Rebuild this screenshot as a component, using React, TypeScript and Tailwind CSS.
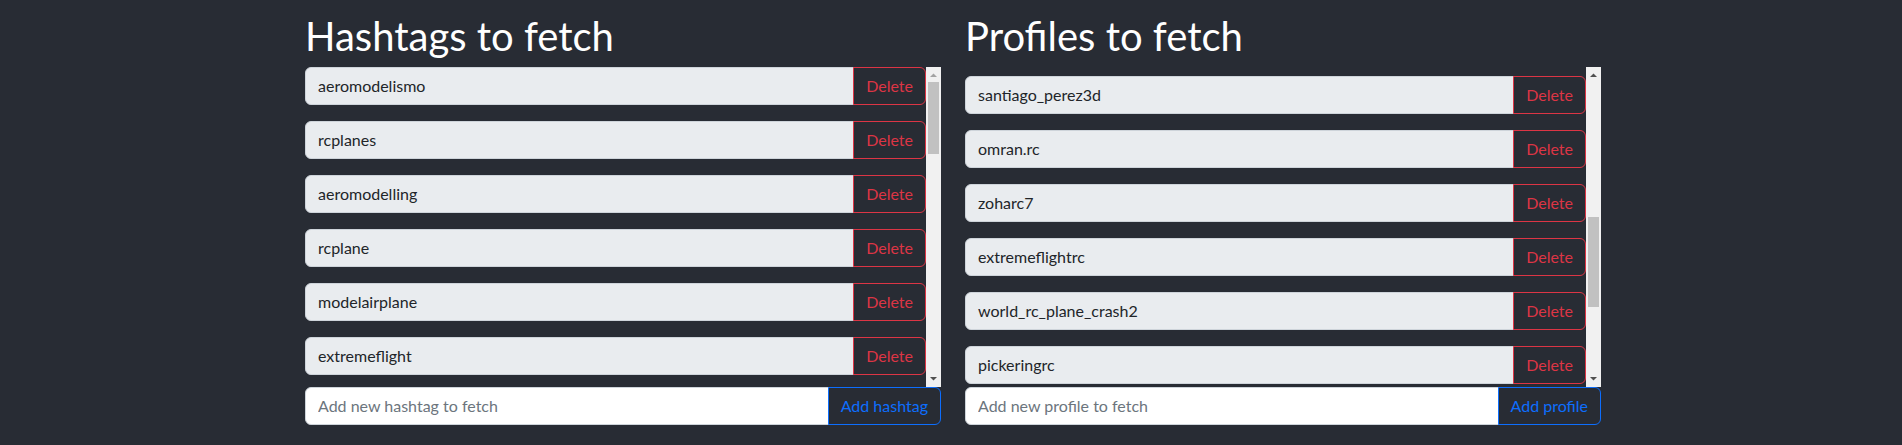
import React, { useLayoutEffect, useRef } from "react";

const hashtags = [
  "aeromodelismo",
  "rcplanes",
  "aeromodelling",
  "rcplane",
  "modelairplane",
  "extremeflight",
  "rcairplane",
  "rcjet",
  "rcflying",
  "rchobby",
  "3dflying",
  "rcpilot",
  "aerobatics",
  "rcaircraft",
  "modelaircraft",
  "rcheli",
  "fpv",
  "rcmodel",
  "rcfly",
  "turbinejet",
  "rcglider",
  "warbird",
  "flyingfield",
  "rcfun",
];

const profiles = [
  "rc_jets_world",
  "flite_test",
  "horizonhobby",
  "rc_plane_lovers",
  "aeromodelismo_br",
  "jetpilot_rc",
  "rc_aerobatics",
  "e_flite_rc",
  "rcgroups",
  "santiago_perez3d",
  "omran.rc",
  "zoharc7",
  "extremeflightrc",
  "world_rc_plane_crash2",
  "pickeringrc",
  "rcplanesdaily",
  "fmsmodel",
  "freewing_rc",
  "3d_hobby_shop",
];

const ROW = 54;
const VIEW = 320;
const ARROW = 15;

function Scrollbar({ count, scrollTop }: { count: number; scrollTop: number }) {
  const contentH = count * ROW;
  const track = VIEW - ARROW * 2;
  const thumbLen = (track * VIEW) / contentH;
  const thumbTop = ARROW + (scrollTop / (contentH - VIEW)) * (track - thumbLen);
  const upColor = scrollTop > 0 ? "#505050" : "#a3a3a3";
  return (
    <div className="relative h-[320px] w-[15px] shrink-0 bg-[#f1f1f1]">
      <svg className="absolute left-0 top-0" width="15" height="15" viewBox="0 0 15 15">
        <polygon points="4,10 11,10 7.5,6.5" fill={upColor} />
      </svg>
      <div
        className="absolute left-[2px] w-[11px] bg-[#c1c1c1]"
        style={{ top: thumbTop, height: thumbLen }}
      />
      <svg className="absolute bottom-0 left-0" width="15" height="15" viewBox="0 0 15 15">
        <polygon points="4,5 11,5 7.5,8.5" fill="#505050" />
      </svg>
    </div>
  );
}

function Section({
  title,
  items,
  scrollTop,
  placeholder,
  addLabel,
}: {
  title: string;
  items: string[];
  scrollTop: number;
  placeholder: string;
  addLabel: string;
}) {
  const listRef = useRef<HTMLDivElement>(null);
  useLayoutEffect(() => {
    if (listRef.current) listRef.current.scrollTop = scrollTop;
  }, [scrollTop]);

  return (
    <div className="w-[636px]">
      <h1 className="mb-[7px] text-[40px] font-normal leading-[48px] text-white">{title}</h1>
      <div className="flex h-[320px]">
        <div ref={listRef} className="h-[320px] w-[621px] overflow-hidden">
          {items.map((item) => (
            <div key={item} className="mb-4 flex h-[38px]">
              <div className="flex flex-1 items-center rounded-l-[6px] border border-[#ced4da] bg-[#e9ecef] px-3 text-[16px] leading-[24px] text-[#212529]">
                {item}
              </div>
              <button className="-ml-px rounded-r-[6px] border border-[#dc3545] bg-transparent px-3 text-[16px] leading-[24px] text-[#dc3545]">
                Delete
              </button>
            </div>
          ))}
        </div>
        <Scrollbar count={items.length} scrollTop={scrollTop} />
      </div>
      <div className="flex h-[38px]">
        <input
          className="min-w-0 flex-1 rounded-l-[6px] border border-[#ced4da] bg-white px-3 text-[16px] leading-[24px] text-[#212529] outline-none placeholder:text-[#6c757d]"
          placeholder={placeholder}
          readOnly
        />
        <button className="-ml-px rounded-r-[6px] border border-[#0d6efd] bg-transparent px-3 text-[16px] leading-[24px] text-[#0d6efd]">
          {addLabel}
        </button>
      </div>
    </div>
  );
}

export default function App() {
  return (
    <div
      className="min-h-[445px] w-full bg-[#282c34] pt-[12px]"
      style={{ fontFamily: "Lato, 'Liberation Sans', sans-serif" }}
    >
      <div className="ml-[305px] flex gap-6">
        <Section
          title="Hashtags to fetch"
          items={hashtags}
          scrollTop={0}
          placeholder="Add new hashtag to fetch"
          addLabel="Add hashtag"
        />
        <Section
          title="Profiles to fetch"
          items={profiles}
          scrollTop={477}
          placeholder="Add new profile to fetch"
          addLabel="Add profile"
        />
      </div>
    </div>
  );
}
